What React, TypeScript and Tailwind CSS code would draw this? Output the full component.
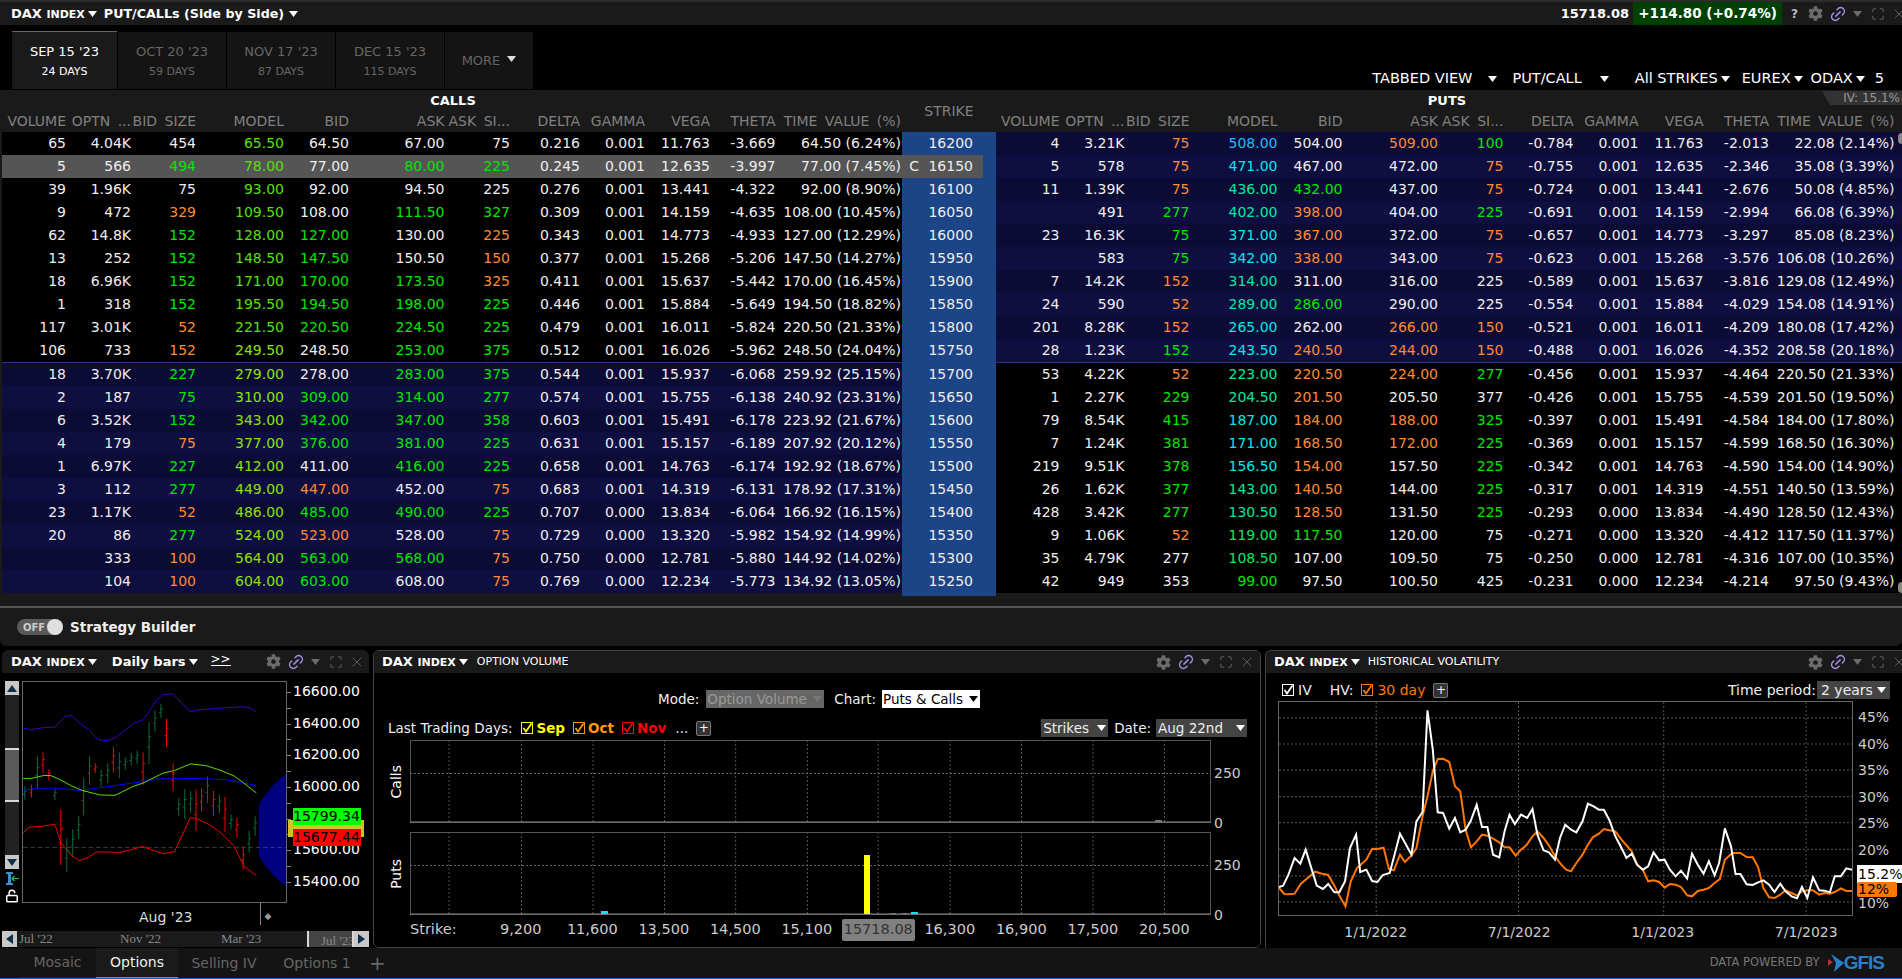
import { Link2, LockOpen, Maximize, X } from "lucide-react";
import { FaCog } from "react-icons/fa";

const COLORS: Record<string, string> = {
    g: "text-[#00e600]",
    o: "text-[#ff8a33]",
    y: "text-[#55e000]",
    l: "text-[#8ee000]",
    b: "text-[#22bbff]",
    c: "text-[#00e8e8]",
    e: "text-[#00e8a0]",
    f: "text-[#00e860]",
};

const CALL_GRID = "grid grid-cols-[64px_65px_65px_88px_65px_95.5px_65.5px_70px_65px_65px_65.5px_125.5px] w-[900px] shrink-0 text-right";
const PUT_GRID = "grid grid-cols-[63.5px_65px_65px_88px_65px_95.5px_65.5px_70px_65px_65px_65.5px_125.5px] w-[906px] shrink-0 text-right";

const HEADERS = ["VOLUME", "OPTN ...", "BID SIZE", "MODEL", "BID", "ASK", "ASK SI...", "DELTA", "GAMMA", "VEGA", "THETA", "TIME VALUE (%)"];

const STRIKES = [16200, 16150, 16100, 16050, 16000, 15950, 15900, 15850, 15800, 15750, 15700, 15650, 15600, 15550, 15500, 15450, 15400, 15350, 15300, 15250];

const CALLS = [
    "65|4.04K|454|y:65.50|64.50|67.00|75|0.216|0.001|11.763|-3.669|64.50 (6.24%)",
    "5|566|g:494|y:78.00|77.00|g:80.00|g:225|0.245|0.001|12.635|-3.997|77.00 (7.45%)",
    "39|1.96K|75|y:93.00|92.00|94.50|225|0.276|0.001|13.441|-4.322|92.00 (8.90%)",
    "9|472|o:329|y:109.50|108.00|g:111.50|g:327|0.309|0.001|14.159|-4.635|108.00 (10.45%)",
    "62|14.8K|g:152|y:128.00|g:127.00|130.00|o:225|0.343|0.001|14.773|-4.933|127.00 (12.29%)",
    "13|252|g:152|y:148.50|g:147.50|150.50|o:150|0.377|0.001|15.268|-5.206|147.50 (14.27%)",
    "18|6.96K|g:152|y:171.00|g:170.00|g:173.50|o:325|0.411|0.001|15.637|-5.442|170.00 (16.45%)",
    "1|318|g:152|y:195.50|g:194.50|g:198.00|g:225|0.446|0.001|15.884|-5.649|194.50 (18.82%)",
    "117|3.01K|o:52|y:221.50|g:220.50|g:224.50|g:225|0.479|0.001|16.011|-5.824|220.50 (21.33%)",
    "106|733|o:152|l:249.50|248.50|g:253.00|g:375|0.512|0.001|16.026|-5.962|248.50 (24.04%)",
    "18|3.70K|g:227|l:279.00|278.00|g:283.00|g:375|0.544|0.001|15.937|-6.068|259.92 (25.15%)",
    "2|187|g:75|l:310.00|g:309.00|g:314.00|g:277|0.574|0.001|15.755|-6.138|240.92 (23.31%)",
    "6|3.52K|g:152|l:343.00|g:342.00|g:347.00|g:358|0.603|0.001|15.491|-6.178|223.92 (21.67%)",
    "4|179|o:75|l:377.00|g:376.00|g:381.00|g:225|0.631|0.001|15.157|-6.189|207.92 (20.12%)",
    "1|6.97K|g:227|l:412.00|411.00|g:416.00|g:225|0.658|0.001|14.763|-6.174|192.92 (18.67%)",
    "3|112|g:277|l:449.00|o:447.00|452.00|o:75|0.683|0.001|14.319|-6.131|178.92 (17.31%)",
    "23|1.17K|o:52|l:486.00|g:485.00|g:490.00|g:225|0.707|0.000|13.834|-6.064|166.92 (16.15%)",
    "20|86|g:277|l:524.00|o:523.00|528.00|o:75|0.729|0.000|13.320|-5.982|154.92 (14.99%)",
    "|333|o:100|l:564.00|g:563.00|g:568.00|o:75|0.750|0.000|12.781|-5.880|144.92 (14.02%)",
    "|104|o:100|l:604.00|g:603.00|608.00|o:75|0.769|0.000|12.234|-5.773|134.92 (13.05%)",
];

const PUTS = [
    "4|3.21K|o:75|b:508.00|504.00|o:509.00|g:100|-0.784|0.001|11.763|-2.013|22.08 (2.14%)",
    "5|578|o:75|c:471.00|467.00|472.00|o:75|-0.755|0.001|12.635|-2.346|35.08 (3.39%)",
    "11|1.39K|o:75|e:436.00|g:432.00|437.00|o:75|-0.724|0.001|13.441|-2.676|50.08 (4.85%)",
    "|491|g:277|e:402.00|o:398.00|404.00|g:225|-0.691|0.001|14.159|-2.994|66.08 (6.39%)",
    "23|16.3K|g:75|c:371.00|o:367.00|372.00|o:75|-0.657|0.001|14.773|-3.297|85.08 (8.23%)",
    "|583|g:75|c:342.00|o:338.00|343.00|o:75|-0.623|0.001|15.268|-3.576|106.08 (10.26%)",
    "7|14.2K|o:152|e:314.00|311.00|316.00|225|-0.589|0.001|15.637|-3.816|129.08 (12.49%)",
    "24|590|o:52|e:289.00|g:286.00|290.00|225|-0.554|0.001|15.884|-4.029|154.08 (14.91%)",
    "201|8.28K|o:152|c:265.00|262.00|o:266.00|o:150|-0.521|0.001|16.011|-4.209|180.08 (17.42%)",
    "28|1.23K|g:152|c:243.50|o:240.50|o:244.00|o:150|-0.488|0.001|16.026|-4.352|208.58 (20.18%)",
    "53|4.22K|o:52|e:223.00|o:220.50|o:224.00|g:277|-0.456|0.001|15.937|-4.464|220.50 (21.33%)",
    "1|2.27K|g:229|e:204.50|o:201.50|205.50|377|-0.426|0.001|15.755|-4.539|201.50 (19.50%)",
    "79|8.54K|g:415|c:187.00|o:184.00|o:188.00|g:325|-0.397|0.001|15.491|-4.584|184.00 (17.80%)",
    "7|1.24K|g:381|c:171.00|o:168.50|o:172.00|g:225|-0.369|0.001|15.157|-4.599|168.50 (16.30%)",
    "219|9.51K|g:378|c:156.50|o:154.00|157.50|g:225|-0.342|0.001|14.763|-4.590|154.00 (14.90%)",
    "26|1.62K|g:377|e:143.00|o:140.50|144.00|g:225|-0.317|0.001|14.319|-4.551|140.50 (13.59%)",
    "428|3.42K|g:277|e:130.50|o:128.50|131.50|g:225|-0.293|0.000|13.834|-4.490|128.50 (12.43%)",
    "9|1.06K|o:52|f:119.00|g:117.50|120.00|75|-0.271|0.000|13.320|-4.412|117.50 (11.37%)",
    "35|4.79K|277|f:108.50|107.00|109.50|75|-0.250|0.000|12.781|-4.316|107.00 (10.35%)",
    "42|949|353|g:99.00|97.50|100.50|425|-0.231|0.000|12.234|-4.214|97.50 (9.43%)",
];

// OHLC bars of the small chart: x, high, low, up?
const BARS: [number, number, number, boolean][] = [
    [72, 590, 630, true], [92, 585, 623, false], [110, 500, 595, true], [127, 487, 550, false], [145, 538, 572, false],
    [163, 597, 632, true], [181, 660, 828, false], [199, 747, 848, true], [217, 720, 805, true], [235, 680, 750, true],
    [250, 565, 678, true], [268, 498, 585, true], [285, 520, 550, false], [303, 540, 590, true], [323, 520, 580, true],
    [340, 470, 548, false], [358, 487, 565, true], [376, 502, 540, true], [394, 488, 527, true], [412, 482, 522, true],
    [430, 487, 585, false], [448, 395, 522, true], [466, 360, 425, true], [484, 340, 383, true], [501, 385, 470, false],
    [521, 520, 605, false], [538, 625, 680, true], [556, 598, 688, true], [574, 604, 670, true], [590, 600, 725, false],
    [607, 595, 665, false], [625, 560, 640, true], [643, 603, 680, false], [661, 615, 672, true], [678, 622, 728, false],
    [696, 675, 720, true], [714, 685, 745, false], [733, 772, 842, false], [751, 725, 790, true], [769, 680, 740, true],
];

const IV_LINE = "45,742 55,738 68,705 83,655 97,672 110,630 125,690 137,738 152,748 165,733 180,758 192,758 206,725 218,625 233,585 243,697 258,690 272,724 285,727 298,706 315,700 340,582 368,645 380,545 395,517 407,212 420,330 432,518 445,520 460,567 474,535 487,578 500,570 512,545 527,495 540,562 553,562 567,645 582,653 595,575 607,525 620,553 635,525 650,535 663,508 675,585 690,632 703,638 718,660 730,595 743,555 757,570 770,578 785,545 798,492 812,500 825,510 837,510 850,540 865,590 880,625 892,655 905,642 918,675 932,690 945,680 958,638 972,662 985,660 998,690 1012,710 1025,693 1040,716 1052,642 1066,675 1080,702 1093,665 1107,707 1118,670 1132,566 1147,620 1158,703 1170,703 1185,734 1200,736 1213,728 1226,722 1240,735 1253,757 1267,732 1280,755 1295,770 1308,776 1320,742 1333,775 1347,713 1362,752 1375,753 1388,758 1400,710 1415,710 1428,686 1442,690";
const HV_LINE = "45,745 58,763 70,764 83,762 98,733 112,718 133,696 150,702 165,706 180,738 193,770 207,800 220,725 235,685 258,660 272,627 285,628 300,624 313,688 325,692 340,645 352,667 368,647 380,625 395,530 407,470 420,395 432,358 445,357 460,367 474,440 487,455 500,570 513,623 527,605 540,585 553,588 567,597 582,608 595,623 607,623 622,648 635,630 648,617 663,590 675,575 690,595 703,617 718,650 732,673 745,690 757,695 770,670 785,645 798,615 810,593 825,582 837,568 850,572 865,575 880,600 905,635 918,675 932,690 945,725 958,722 972,727 985,744 998,733 1012,735 1025,742 1040,767 1052,770 1066,754 1080,750 1093,745 1107,730 1120,718 1132,660 1150,640 1170,640 1185,652 1200,653 1213,682 1226,745 1240,773 1253,775 1267,765 1280,752 1295,760 1308,768 1320,755 1333,752 1347,752 1362,765 1375,760 1388,762 1400,757 1415,746 1428,754 1442,754";

function Caret({ className = "text-white" }: { className?: string }) {
    return (
        <svg width="9" height="6" viewBox="0 0 9 6" className={`inline-block shrink-0 ${className}`}>
            <polygon points="0,0 9,0 4.5,6" fill="currentColor" />
        </svg>
    );
}

function PanelIcons() {
    return (
        <div className="flex items-center gap-[6px] text-[#6b6b6b]">
            <FaCog size={15} />
            <Link2 size={18} strokeWidth={2} className="text-[#a58be0] -rotate-45" />
            <Caret className="text-[#6b6b6b]" />
            <Maximize size={14} strokeWidth={1.5} className="ml-[3px]" />
            <X size={16} strokeWidth={1.25} />
        </div>
    );
}

function Ticker() {
    return (
        <span className="flex items-center gap-[3px] font-bold text-[13px] text-white">
            <span>
                DAX <span className="text-[11px]">INDEX</span>
            </span>
            <Caret />
        </span>
    );
}

function Cell({ value }: { value: string }) {
    const parts = value.split(":");
    if (parts.length === 2) {
        return <div className={COLORS[parts[0]]}>{parts[1]}</div>;
    }
    return <div>{value}</div>;
}

function OptionRow({ index }: { index: number }) {
    const selected = index === 1;
    const upper = index < 10;
    const navy = index % 2 === 0 ? "bg-[#0b0b35]" : "bg-[#0e0e40]";
    const callBg = selected ? "bg-[#555555]" : upper ? "bg-black" : navy;
    const putBg = upper ? navy : "bg-black";
    return (
        <div className="flex h-[23px] leading-[23px] pl-[2px]">
            <div className={`${CALL_GRID} ${callBg}`}>
                {CALLS[index].split("|").map((v, i) => (
                    <Cell key={i} value={v} />
                ))}
            </div>
            <div className="flex w-[94px] shrink-0 bg-[#1c4587]">
                <div className={`flex w-[81px] ${selected ? "bg-[#555555]" : ""}`}>
                    <span className="w-[17px] text-right">{selected ? "C" : ""}</span>
                    <span className="w-[54px] text-right">{STRIKES[index]}</span>
                </div>
            </div>
            <div className={`${PUT_GRID} ${putBg}`}>
                {PUTS[index].split("|").map((v, i) => (
                    <Cell key={i} value={v} />
                ))}
            </div>
        </div>
    );
}

function HeaderLabels({ grid }: { grid: string }) {
    return (
        <div className={`${grid} text-[#808080] whitespace-nowrap [word-spacing:3px]`}>
            {HEADERS.map((h) => (
                <div key={h}>{h}</div>
            ))}
        </div>
    );
}

function ExpiryTab({ date, days, active }: { date: string; days: string; active?: boolean }) {
    return (
        <div
            className={`flex flex-col items-center justify-center gap-[6px] ${
                active ? "w-[105px] bg-[#1a1a1a] text-white border-t border-[#666666]" : "w-[108px] bg-[#141414] text-[#666666] mt-[1px]"
            }`}
        >
            <span className="text-[13px] leading-[15px]">{date}</span>
            <span className="text-[11px] leading-[13px]">{days}</span>
        </div>
    );
}

function VolumePlot({ children }: { children?: React.ReactNode }) {
    const xs = [39, 111.5, 183, 254.5, 325.7, 397.4, 468, 540, 611.5, 683, 754.5];
    return (
        <svg width="801" height="83" viewBox="0 0 801 83" className="shrink-0">
            <rect x="0.5" y="0.5" width="800" height="82" fill="none" stroke="#555555" />
            {xs.map((x) => (
                <line key={x} x1={x} x2={x} y1="0" y2="82" stroke="#555555" strokeDasharray="2 2" />
            ))}
            <line x1="0" x2="801" y1="33.5" y2="33.5" stroke="#666666" strokeDasharray="2 2" />
            <line x1="0" x2="801" y1="82" y2="82" stroke="#888888" />
            {children}
        </svg>
    );
}

function SmallChart() {
    return (
        <svg width="263" height="220" viewBox="67 274 795 666" className="shrink-0 bg-black border border-[#666666] box-content">
            <polygon points="862,552 820,590 790,630 780,650 780,800 800,830 830,865 862,892" fill="#000080" />
            <line x1="67" x2="862" y1="775" y2="775" stroke="#555555" strokeWidth="2" strokeDasharray="14 8" />
            {BARS.map(([x, high, low, up]) => (
                <g key={x} stroke={up ? "#0e6b3c" : "#ff0000"} strokeWidth="3">
                    <line x1={x} x2={x} y1={high} y2={low} />
                    <line x1={x - 6} x2={x} y1={high + (low - high) * 0.6} y2={high + (low - high) * 0.6} />
                    <line x1={x} x2={x + 6} y1={high + (low - high) * 0.35} y2={high + (low - high) * 0.35} />
                </g>
            ))}
            <polyline fill="none" stroke="#3a00c8" strokeWidth="3" points="67,413 90,418 130,412 163,411 195,377 215,376 240,400 268,420 290,445 310,452 330,450 350,440 400,400 430,388 450,362 470,330 490,312 520,310 545,335 573,364 600,358 680,352 735,349 755,353 773,365" />
            <polyline fill="none" stroke="#0000ff" strokeWidth="3" points="67,602 100,597 160,595 240,602 330,590 430,575 480,567 600,566 680,570 773,587" />
            <polyline fill="none" stroke="#5fdc00" strokeWidth="3" points="67,566 90,566 130,557 150,557 180,570 210,587 245,602 300,616 345,617 400,590 430,580 490,550 525,542 573,522 620,527 660,540 705,558 735,580 773,610" />
            <polyline fill="none" stroke="#f00000" strokeWidth="3" points="67,730 85,714 120,711 163,705 181,760 210,795 235,815 265,805 290,788 360,790 430,772 490,794 525,787 573,685 590,687 630,705 665,730 705,770 735,832 773,860" />
        </svg>
    );
}

function ScrollButton({ up }: { up?: boolean }) {
    return (
        <div className="h-[14px] w-[14px] shrink-0 bg-[#c8c8c8] flex items-center justify-center">
            <svg width="10" height="7" viewBox="0 0 10 7">
                <polygon points={up ? "0,7 10,7 5,0" : "0,0 10,0 5,7"} fill="#10304a" />
            </svg>
        </div>
    );
}

function TimelineArrow({ right }: { right?: boolean }) {
    return (
        <div className="h-[16px] w-[15px] bg-[#c8c8c8] flex items-center justify-center shrink-0">
            <svg width="7" height="10" viewBox="0 0 7 10">
                <polygon points={right ? "0,0 7,5 0,10" : "7,0 0,5 7,10"} fill="#10304a" />
            </svg>
        </div>
    );
}

function CheckBox({ className }: { className: string }) {
    return (
        <svg width="12" height="12" viewBox="0 0 12 12" className={`shrink-0 ${className}`}>
            <rect x="0.5" y="0.5" width="11" height="11" fill="none" stroke="currentColor" />
            <path d="M2.5 6 L5 9.5 L10.5 1.5" fill="none" stroke="currentColor" strokeWidth="1.8" />
        </svg>
    );
}

function PlusBox() {
    return (
        <span className="flex items-center justify-center h-[15px] w-[15px] rounded-[2px] border border-[#777777] bg-[#333333] text-[12px] leading-none text-white">
            +
        </span>
    );
}

export default function App() {
    return (
        <div className="w-[1902px] h-[979px] overflow-hidden flex flex-col bg-black text-[#eeeeee] text-[14px] font-['DejaVu_Sans',sans-serif]">
            {/* title bar */}
            <div className="h-[25px] shrink-0 flex items-center bg-[#1a1a1a] border-t-2 border-[#2c2c2c] pl-[11px]">
                <Ticker />
                <span className="ml-[7px] font-bold text-[12.7px] text-white">PUT/CALLs (Side by Side)</span>
                <Caret className="text-white ml-[5px]" />
                <div className="ml-auto -mr-[5px] flex items-center h-full">
                    <span className="font-bold text-[13px] text-white mr-[4px]">15718.08</span>
                    <span className="h-full w-[149px] flex items-center justify-center bg-[#004000] font-bold text-[13.5px] text-white">
                        +114.80 (+0.74%)
                    </span>
                    <span className="ml-[9px] mr-[10px] font-bold text-[12px] text-[#bbbbbb]">?</span>
                    <PanelIcons />
                </div>
            </div>

            {/* expiries */}
            <div className="h-[65px] shrink-0 flex pt-[6px] pl-[12px] pr-[18px]">
                <div className="flex gap-[1px] h-[58px]">
                    <ExpiryTab date="SEP 15 '23" days="24 DAYS" active />
                    <ExpiryTab date="OCT 20 '23" days="59 DAYS" />
                    <ExpiryTab date="NOV 17 '23" days="87 DAYS" />
                    <ExpiryTab date="DEC 15 '23" days="115 DAYS" />
                    <div className="w-[88px] mt-[1px] flex items-center justify-center gap-[7px] bg-[#141414] text-[13px] text-[#666666]">
                        MORE
                        <Caret className="text-[#dddddd] mb-[4px]" />
                    </div>
                </div>
                <div className="ml-auto self-end h-[22px] flex items-center text-[14.5px] text-white whitespace-nowrap">
                    <span>TABBED VIEW</span>
                    <Caret className="ml-[16px]" />
                    <span className="ml-[15px]">PUT/CALL</span>
                    <Caret className="ml-[18px]" />
                    <span className="ml-[26px]">All STRIKES</span>
                    <Caret className="ml-[3px]" />
                    <span className="ml-[12px]">EUREX</span>
                    <Caret className="ml-[3px]" />
                    <span className="ml-[8px]">ODAX</span>
                    <Caret className="ml-[3px]" />
                    <span className="ml-[10px]">5</span>
                </div>
            </div>

            {/* option chain */}
            <div className="relative h-[506px] shrink-0 bg-[#1a1a1a] flex flex-col">
                <div className="h-[42px] shrink-0 flex pl-[2px]">
                    <div className="w-[900px] shrink-0 flex flex-col justify-end">
                        <div className="text-center font-bold text-[13px] text-white leading-[20px] pl-[2px]">CALLS</div>
                        <HeaderLabels grid={CALL_GRID} />
                    </div>
                    <div className="w-[94px] shrink-0 flex items-center justify-center text-[#808080] pt-[1px]">STRIKE</div>
                    <div className="w-[906px] shrink-0 flex flex-col justify-end">
                        <div className="text-center font-bold text-[13px] text-white leading-[20px] pr-[4px]">PUTS</div>
                        <HeaderLabels grid={PUT_GRID} />
                    </div>
                </div>
                {STRIKES.slice(0, 10).map((_, i) => (
                    <OptionRow key={i} index={i} />
                ))}
                <div className="h-[1px] shrink-0 flex pl-[2px]">
                    <div className="w-[900px] bg-[#30308c]" />
                    <div className="w-[94px] bg-[#1c4587]" />
                    <div className="w-[906px] bg-[#30308c]" />
                </div>
                {STRIKES.slice(10).map((_, i) => (
                    <OptionRow key={i} index={i + 10} />
                ))}
                <div className="flex-1 flex pl-[902px]">
                    <div className="w-[94px] bg-[#1c4587]" />
                </div>
                <div className="absolute top-[1px] right-0 h-[14px] w-[80px] flex items-center justify-end pr-[2px] bg-[#333333] text-[12px] text-[#999999] [clip-path:polygon(0_0,100%_0,100%_100%,10%_100%)]">
                    IV: 15.1%
                </div>
                <div className="absolute top-[43px] right-0 h-[11px] w-[4px] rounded-l-sm bg-[#888888]" />
                <div className="absolute bottom-[3px] right-0 h-[11px] w-[4px] rounded-l-sm bg-[#888888]" />
            </div>

            {/* strategy builder */}
            <div className="h-[10px] shrink-0 bg-[#1a1a1a]" />
            <div className="h-[2px] shrink-0 bg-[#555555]" />
            <div className="h-[38px] shrink-0 flex items-center gap-[7px] pl-[17px] bg-[#1a1a1a] rounded-b-md">
                <div className="flex items-center justify-between w-[46px] h-[16px] pl-[6px] rounded-full bg-[#5a5a5a]">
                    <span className="text-[10px] font-bold text-[#cccccc]">OFF</span>
                    <span className="h-[16px] w-[16px] rounded-full bg-[#e0e0e0]" />
                </div>
                <span className="font-bold text-[13.5px] text-[#eeeeee]">Strategy Builder</span>
            </div>

            {/* panels */}
            <div className="h-[298px] shrink-0 mt-[4px] flex gap-[4px] pl-[2px]">
                {/* bar chart */}
                <div className="w-[367px] shrink-0 flex flex-col">
                    <div className="h-[23px] shrink-0 flex items-center pl-[9px] pr-[4px] bg-[#1a1a1a] rounded-t-md">
                        <Ticker />
                        <span className="ml-[15px] font-bold text-[13px] text-white">Daily bars</span>
                        <Caret className="text-white ml-[3px]" />
                        <span className="ml-[13px] mb-[4px] text-[12px] leading-[11px] text-white border-b border-white">{">>"}</span>
                        <div className="ml-auto">
                            <PanelIcons />
                        </div>
                    </div>
                    <div className="flex-1 bg-black flex flex-col">
                        <div className="flex pl-[3px] pt-[8px]">
                            <div className="w-[17px] h-[222px] shrink-0 flex flex-col items-start">
                                <ScrollButton up />
                                <div className="w-[14px] flex-1 bg-[#222222] flex flex-col pt-[53px]">
                                    <div className="h-[54px] bg-[#5a5a5a] border-y-2 border-[#d8d8d8]" />
                                </div>
                                <ScrollButton />
                                <div className="w-[14px] h-[34px] shrink-0 flex flex-col items-center justify-between pt-[3px]">
                                    <svg width="14" height="13" viewBox="0 0 14 13">
                                        <rect x="3" y="0" width="3" height="13" fill="#3f8fd0" />
                                        <rect x="1" y="0" width="7" height="2" fill="#3f8fd0" />
                                        <rect x="1" y="11" width="7" height="2" fill="#3f8fd0" />
                                        <path d="M7 6.5 H14 M9.5 4 L7 6.5 L9.5 9" stroke="#20c060" strokeWidth="1.2" fill="none" />
                                    </svg>
                                    <LockOpen size={14} strokeWidth={2.5} className="text-white" />
                                </div>
                            </div>
                            <SmallChart />
                            <div className="w-[4px] h-[222px] shrink-0 pt-[11px] pb-[20px] flex flex-col justify-between">
                                {[0, 1, 2, 3, 4, 5, 6, 7, 8, 9, 10, 11, 12].map((t) => (
                                    <span key={t} className="h-[1px] w-[4px] bg-[#888888]" />
                                ))}
                            </div>
                            <div className="relative flex-1 ml-[2px] pt-[2px] h-[208px] flex flex-col justify-between text-[14px] leading-[16px] text-white">
                                {["16600.00", "16400.00", "16200.00", "16000.00", "", "15600.00", "15400.00"].map((p, i) => (
                                    <span key={i} className="h-[16px]">
                                        {p}
                                    </span>
                                ))}
                                <div className="absolute top-[139px] -left-[5px] w-[76px] h-[17px] bg-[#c8c820]" />
                                <div className="absolute top-[127px] left-0 w-[68px] h-[17px] bg-[#00ff00] text-black leading-[17px]">15799.34</div>
                                <div className="absolute top-[148px] left-0 w-[68px] h-[17px] bg-[#ff0000] text-black leading-[17px]">15677.44</div>
                            </div>
                        </div>
                        <div className="h-[28px] pl-[137px] flex items-center text-[14px] text-[#dddddd]">
                            <span>Aug '23</span>
                            <span className="ml-[68px] h-[22px] mb-[6px] border-l border-[#888888]" />
                            <span className="ml-[3px] text-[9px] text-[#999999]">◆</span>
                        </div>
                        <div className="h-[16px] flex items-center bg-[#1a1a1a] font-['Liberation_Serif',serif] text-[13px] text-[#888888] whitespace-nowrap">
                            <TimelineArrow />
                            <span className="ml-[2px] w-[101px]">Jul '22</span>
                            <span className="w-[101px]">Nov '22</span>
                            <span className="w-[86px]">Mar '23</span>
                            <span className="w-[47px] h-full overflow-hidden bg-[#444444] border-x-2 border-[#d8d8d8] pl-[12px]">Jul '23</span>
                            <TimelineArrow right />
                        </div>
                    </div>
                </div>

                {/* option volume */}
                <div className="w-[888px] shrink-0 flex flex-col border border-[#444444] rounded-md overflow-hidden">
                    <div className="h-[22px] shrink-0 flex items-center pl-[8px] pr-[5px] bg-[#1a1a1a]">
                        <Ticker />
                        <span className="ml-[9px] text-[11px] text-white">OPTION VOLUME</span>
                        <div className="ml-auto">
                            <PanelIcons />
                        </div>
                    </div>
                    <div className="flex-1 bg-black flex flex-col text-[13.5px]">
                        <div className="h-[18px] mt-[17px] flex items-center pl-[284px]">
                            <span className="mr-[7px]">Mode:</span>
                            <span className="flex items-center justify-between w-[118px] h-[18px] pl-[1px] pr-[2px] bg-[#666666] text-[#999999] whitespace-nowrap">
                                Option Volume
                                <Caret className="text-[#777777]" />
                            </span>
                            <span className="ml-[10px] mr-[6px]">Chart:</span>
                            <span className="flex items-center justify-between w-[98px] h-[18px] pl-[1px] pr-[2px] bg-white text-black">
                                Puts &amp; Calls
                                <Caret className="text-black" />
                            </span>
                        </div>
                        <div className="h-[18px] mt-[11px] flex items-center pl-[14px] pr-[13px] whitespace-nowrap">
                            <span>Last Trading Days:</span>
                            <CheckBox className="ml-[9px] text-[#ffff00]" />
                            <span className="ml-[3px] font-bold text-[#ffff00]">Sep</span>
                            <CheckBox className="ml-[8px] text-[#ff9900]" />
                            <span className="ml-[3px] font-bold text-[#ff9900]">Oct</span>
                            <CheckBox className="ml-[8px] text-[#ff0000]" />
                            <span className="ml-[3px] font-bold text-[#ff0000]">Nov</span>
                            <span className="ml-[9px] mr-[8px]">...</span>
                            <PlusBox />
                            <span className="ml-auto flex items-center justify-between w-[67px] h-[18px] px-[2px] bg-[#444444]">
                                Strikes
                                <Caret className="text-white" />
                            </span>
                            <span className="ml-[6px] mr-[5px]">Date:</span>
                            <span className="flex items-center justify-between w-[91px] h-[18px] px-[2px] bg-[#444444]">
                                Aug 22nd
                                <Caret className="text-white" />
                            </span>
                        </div>
                        <div className="mt-[3px] flex h-[83px]">
                            <div className="w-[36px] flex items-center justify-end pr-[3px]">
                                <span className="[writing-mode:vertical-rl] rotate-180 text-[14px] text-white">Calls</span>
                            </div>
                            <VolumePlot>
                                <rect x="745" y="80" width="7" height="2" fill="#777777" />
                            </VolumePlot>
                            <div className="flex-1 pl-[3px] pt-[24px] flex flex-col justify-between text-[14px] leading-[18px] text-[#cccccc] -mb-[9px]">
                                <span>250</span>
                                <span>0</span>
                            </div>
                        </div>
                        <div className="mt-[9px] flex h-[83px]">
                            <div className="w-[36px] flex items-center justify-end pr-[3px]">
                                <span className="[writing-mode:vertical-rl] rotate-180 text-[14px] text-white">Puts</span>
                            </div>
                            <VolumePlot>
                                <rect x="454" y="23" width="6" height="59" fill="#ffff00" />
                                <rect x="191" y="79" width="7" height="3" fill="#00e8e8" />
                                <rect x="480" y="81" width="6" height="1" fill="#777777" />
                                <rect x="492" y="81" width="6" height="1" fill="#777777" />
                                <rect x="501" y="80" width="7" height="2" fill="#00e8e8" />
                            </VolumePlot>
                            <div className="flex-1 pl-[3px] pt-[24px] flex flex-col justify-between text-[14px] leading-[18px] text-[#cccccc] -mb-[9px]">
                                <span>250</span>
                                <span>0</span>
                            </div>
                        </div>
                        <div className="mt-[6px] h-[18px] flex items-center pl-[36px] text-[14.5px] text-[#cccccc] whitespace-nowrap">
                            <span className="w-[75px]">Strike:</span>
                            {["9,200", "11,600", "13,500", "14,500", "15,100", "15718.08", "16,300", "16,900", "17,500", "20,500"].map((s) =>
                                s === "15718.08" ? (
                                    <span key={s} className="w-[71.5px] flex justify-center">
                                        <span className="px-[2px] bg-[#808080] text-[#333333] rounded-[2px]">{s}</span>
                                    </span>
                                ) : (
                                    <span key={s} className="w-[71.5px] text-center">
                                        {s}
                                    </span>
                                ),
                            )}
                        </div>
                    </div>
                </div>

                {/* historical volatility */}
                <div className="flex-1 flex flex-col border-l border-t border-[#444444] rounded-tl-md overflow-hidden">
                    <div className="h-[22px] shrink-0 flex items-center pl-[8px] bg-[#1a1a1a]">
                        <Ticker />
                        <span className="ml-[8px] text-[11px] text-white">HISTORICAL VOLATILITY</span>
                        <div className="ml-auto -mr-[5px]">
                            <PanelIcons />
                        </div>
                    </div>
                    <div className="flex-1 bg-black flex flex-col">
                        <div className="h-[18px] mt-[8px] flex items-center pl-[16px] pr-[12px] text-[14px]">
                            <CheckBox className="text-white" />
                            <span className="ml-[4px]">IV</span>
                            <span className="ml-[18px]">HV:</span>
                            <CheckBox className="ml-[8px] text-[#ff7700]" />
                            <span className="ml-[4px] text-[#ff7700]">30 day</span>
                            <span className="ml-[8px]">
                                <PlusBox />
                            </span>
                            <span className="ml-auto mr-[1px]">Time period:</span>
                            <span className="flex items-center justify-between w-[73px] h-[18px] px-[4px] bg-[#444444] whitespace-nowrap">
                                2 years
                                <Caret className="text-white" />
                            </span>
                        </div>
                        <div className="mt-[2px] flex">
                            <svg width="573" height="213" viewBox="45 187 1397 639" preserveAspectRatio="none" className="ml-[12px] shrink-0 border border-[#666666] box-content">
                                {[235, 313, 391, 471, 549, 629, 709, 787].map((y) => (
                                    <line key={y} x1="45" x2="1442" y1={y} y2={y} stroke="#555555" strokeDasharray="2 2" vectorEffect="non-scaling-stroke" />
                                ))}
                                {[282, 629, 983, 1330].map((x) => (
                                    <line key={x} x1={x} x2={x} y1="187" y2="826" stroke="#555555" strokeDasharray="2 2" vectorEffect="non-scaling-stroke" />
                                ))}
                                <polyline points={HV_LINE} fill="none" stroke="#ff7700" strokeWidth="2" vectorEffect="non-scaling-stroke" />
                                <polyline points={IV_LINE} fill="none" stroke="#ffffff" strokeWidth="2" vectorEffect="non-scaling-stroke" />
                            </svg>
                            <div className="relative flex-1 h-[213px] pl-[5px] pt-[7px] pb-[2px] flex flex-col justify-between text-[14px] leading-[18px] text-[#cccccc]">
                                {["45%", "40%", "35%", "30%", "25%", "20%", "", "10%"].map((p, i) => (
                                    <span key={i} className="h-[18px]">
                                        {p}
                                    </span>
                                ))}
                                <div className="absolute top-[164px] left-[4px] w-[47px] h-[18px] pl-[1px] bg-white text-black leading-[18px]">15.2%</div>
                                <div className="absolute top-[181px] left-[4px] w-[40px] h-[15px] pl-[1px] bg-[#ff7700] text-black leading-[15px] rounded-[2px]">12%</div>
                            </div>
                        </div>
                        <div className="mt-[6px] pl-[38px] flex text-[14px] text-[#cccccc]">
                            {["1/1/2022", "7/1/2022", "1/1/2023", "7/1/2023"].map((d) => (
                                <span key={d} className="w-[143.5px] text-center">
                                    {d}
                                </span>
                            ))}
                        </div>
                    </div>
                </div>
            </div>

            {/* page tabs */}
            <div className="flex-1 flex items-stretch bg-[#141414] pl-[19px] pr-[18px] text-[14px] text-[#666666]">
                <div className="w-[77px] flex items-center justify-center border-b border-[#222222]">Mosaic</div>
                <div className="w-[82px] flex items-center justify-center bg-[#1a1a1a] border-b border-[#888888] text-[#eeeeee]">Options</div>
                <div className="w-[92px] flex items-center justify-center">Selling IV</div>
                <div className="w-[94px] flex items-center justify-center">Options 1</div>
                <div className="ml-[5px] flex items-center text-[20px]">+</div>
                <div className="ml-auto flex items-center gap-[8px]">
                    <span className="text-[11.5px] text-[#777777]">DATA POWERED BY</span>
                    <span className="flex items-center">
                        <svg width="16" height="20" viewBox="0 0 16 20">
                            <polygon points="0,6 5,9 0,13" fill="#b03030" />
                            <polygon points="3,1 16,10 6,19 8,10" fill="#2a7fc8" />
                        </svg>
                        <span className="font-['Liberation_Sans',sans-serif] font-bold text-[19px] tracking-[-1px] text-[#2a7fc8]">GFIS</span>
                    </span>
                </div>
            </div>
            <div className="h-[2px] shrink-0 bg-[#0a6cc0]" />
        </div>
    );
}
